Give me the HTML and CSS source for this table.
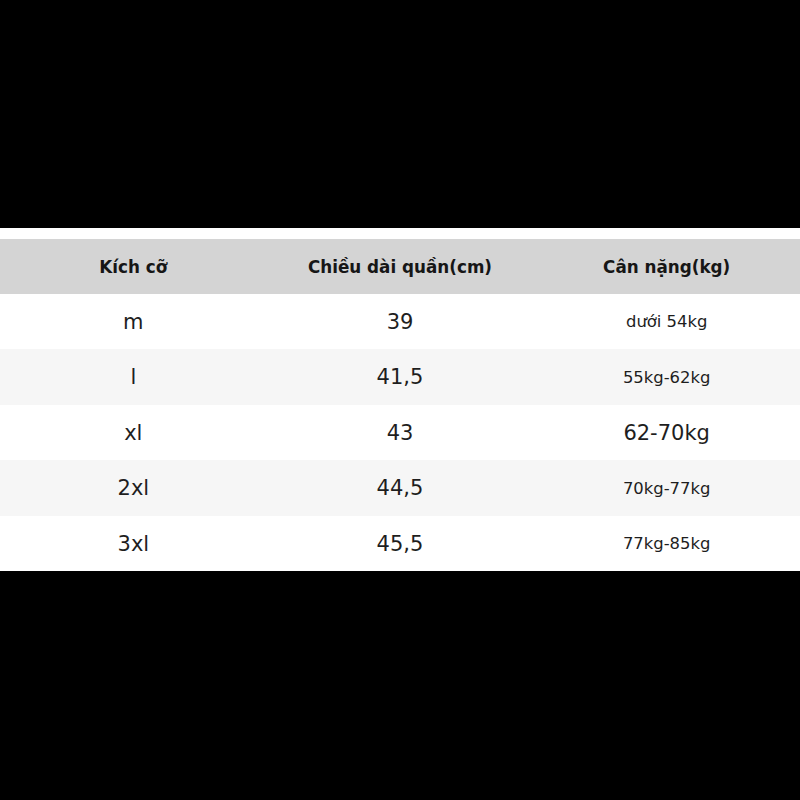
FILE: index.html
```html
<!DOCTYPE html>
<html lang="vi">
<head>
<meta charset="utf-8">
<title>Bảng kích cỡ</title>
<link rel="stylesheet" href="styles.css">
</head>
<body>
<main class="page">
  <section class="sheet">
    <div class="row head">
      <div class="cell">Kích cỡ</div>
      <div class="cell">Chiều dài quần(cm)</div>
      <div class="cell">Cân nặng(kg)</div>
    </div>
    <div class="row odd">
      <div class="cell">m</div>
      <div class="cell">39</div>
      <div class="cell small">dưới 54kg</div>
    </div>
    <div class="row even">
      <div class="cell">l</div>
      <div class="cell">41,5</div>
      <div class="cell small">55kg-62kg</div>
    </div>
    <div class="row odd">
      <div class="cell">xl</div>
      <div class="cell">43</div>
      <div class="cell">62-70kg</div>
    </div>
    <div class="row even">
      <div class="cell">2xl</div>
      <div class="cell">44,5</div>
      <div class="cell small">70kg-77kg</div>
    </div>
    <div class="row odd">
      <div class="cell">3xl</div>
      <div class="cell">45,5</div>
      <div class="cell small">77kg-85kg</div>
    </div>
  </section>
</main>
</body>
</html>
```

FILE: styles.css
```css
html, body {
  margin: 0;
  padding: 0;
  background: #000;
}

.page {
  width: 800px;
  height: 800px;
  padding-top: 228px;
  box-sizing: border-box;
  font-family: "DejaVu Sans", "Liberation Sans", sans-serif;
  color: #1e1e1e;
}

.sheet {
  background: #fff;
  padding-top: 11px;
}

.row {
  display: grid;
  grid-template-columns: 1fr 1fr 1fr;
  align-items: center;
  height: 55px;
}

.row.even {
  background: #f6f6f6;
  height: 56px;
}

.row.head {
  background: #d4d4d4;
  font-weight: bold;
  font-size: 16.8px;
  color: #161616;
}

.cell {
  text-align: center;
  font-size: 21px;
}

.head .cell {
  font-size: 16.8px;
}

.cell.small {
  font-size: 16.4px;
}
```
